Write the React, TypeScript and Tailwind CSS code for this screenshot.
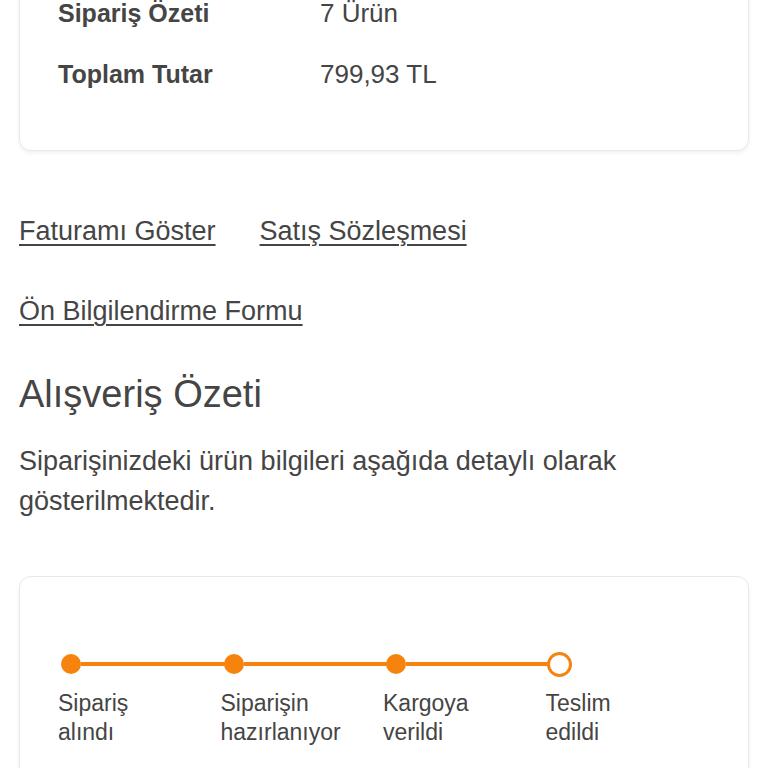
import React from 'react';

const steps = [
  { top: 'Sipariş', bottom: 'alındı', done: true },
  { top: 'Siparişin', bottom: 'hazırlanıyor', done: true },
  { top: 'Kargoya', bottom: 'verildi', done: true },
  { top: 'Teslim', bottom: 'edildi', done: false },
];

export default function App() {
  return (
    <div
      className="min-h-[768px] bg-white px-[19px] text-[#454545] overflow-hidden"
      style={{ fontFamily: '"Liberation Sans", Arial, sans-serif' }}
    >
      {/* Order info card (scrolled partly off screen) */}
      <div className="-mt-[40px] rounded-xl border border-[#e8e8e8] bg-white pt-[22px] pb-[45px] px-[38px] shadow-[0_2px_4px_rgba(0,0,0,0.06)]">
        <div className="flex h-[61px] items-center">
          <span className="w-[262px] text-[25px] font-bold">Sipariş Özeti</span>
          <span className="text-[26px]">7 Ürün</span>
        </div>
        <div className="flex h-[61px] items-center">
          <span className="w-[262px] text-[25px] font-bold">Toplam Tutar</span>
          <span className="text-[26px]">799,93 TL</span>
        </div>
      </div>

      {/* Document links */}
      <div className="mt-[60px] flex gap-[44px] text-[27px] leading-[40px]">
        <a className="underline underline-offset-4 decoration-2">Faturamı Göster</a>
        <a className="underline underline-offset-4 decoration-2">Satış Sözleşmesi</a>
      </div>
      <div className="mt-[40px] text-[27px] leading-[40px]">
        <a className="underline underline-offset-4 decoration-2">Ön Bilgilendirme Formu</a>
      </div>

      {/* Shopping summary */}
      <h2 className="mt-[39px] text-[38px] leading-[48px] font-normal">Alışveriş Özeti</h2>
      <p className="mt-[23px] text-[27px] leading-[40px]">
        Siparişinizdeki ürün bilgileri aşağıda detaylı olarak gösterilmektedir.
      </p>

      {/* Order status timeline */}
      <div className="mt-[55px] rounded-xl border border-[#e8e8e8] bg-white pt-[75px] pb-[40px] px-[39px] shadow-[0_2px_4px_rgba(0,0,0,0.06)]">
        <div className="grid grid-cols-4">
          {steps.map((s, i) => (
            <div key={i} className="flex flex-col">
              <div className="flex h-[24px] items-center">
                {s.done ? (
                  <span className="ml-[2px] h-[20px] w-[20px] shrink-0 rounded-full bg-[#f7830f]" />
                ) : (
                  <span className="h-[25px] w-[25px] shrink-0 rounded-full border-[3px] border-[#f7830f] bg-white" />
                )}
                {i < steps.length - 1 && (
                  <span className="-mr-[4px] h-[4px] flex-1 bg-[#f7830f]" />
                )}
              </div>
              <div className="mt-[13px] -ml-[1px] text-[23px] leading-[29px]">
                <div>{s.top}</div>
                <div>{s.bottom}</div>
              </div>
            </div>
          ))}
        </div>
      </div>
    </div>
  );
}
